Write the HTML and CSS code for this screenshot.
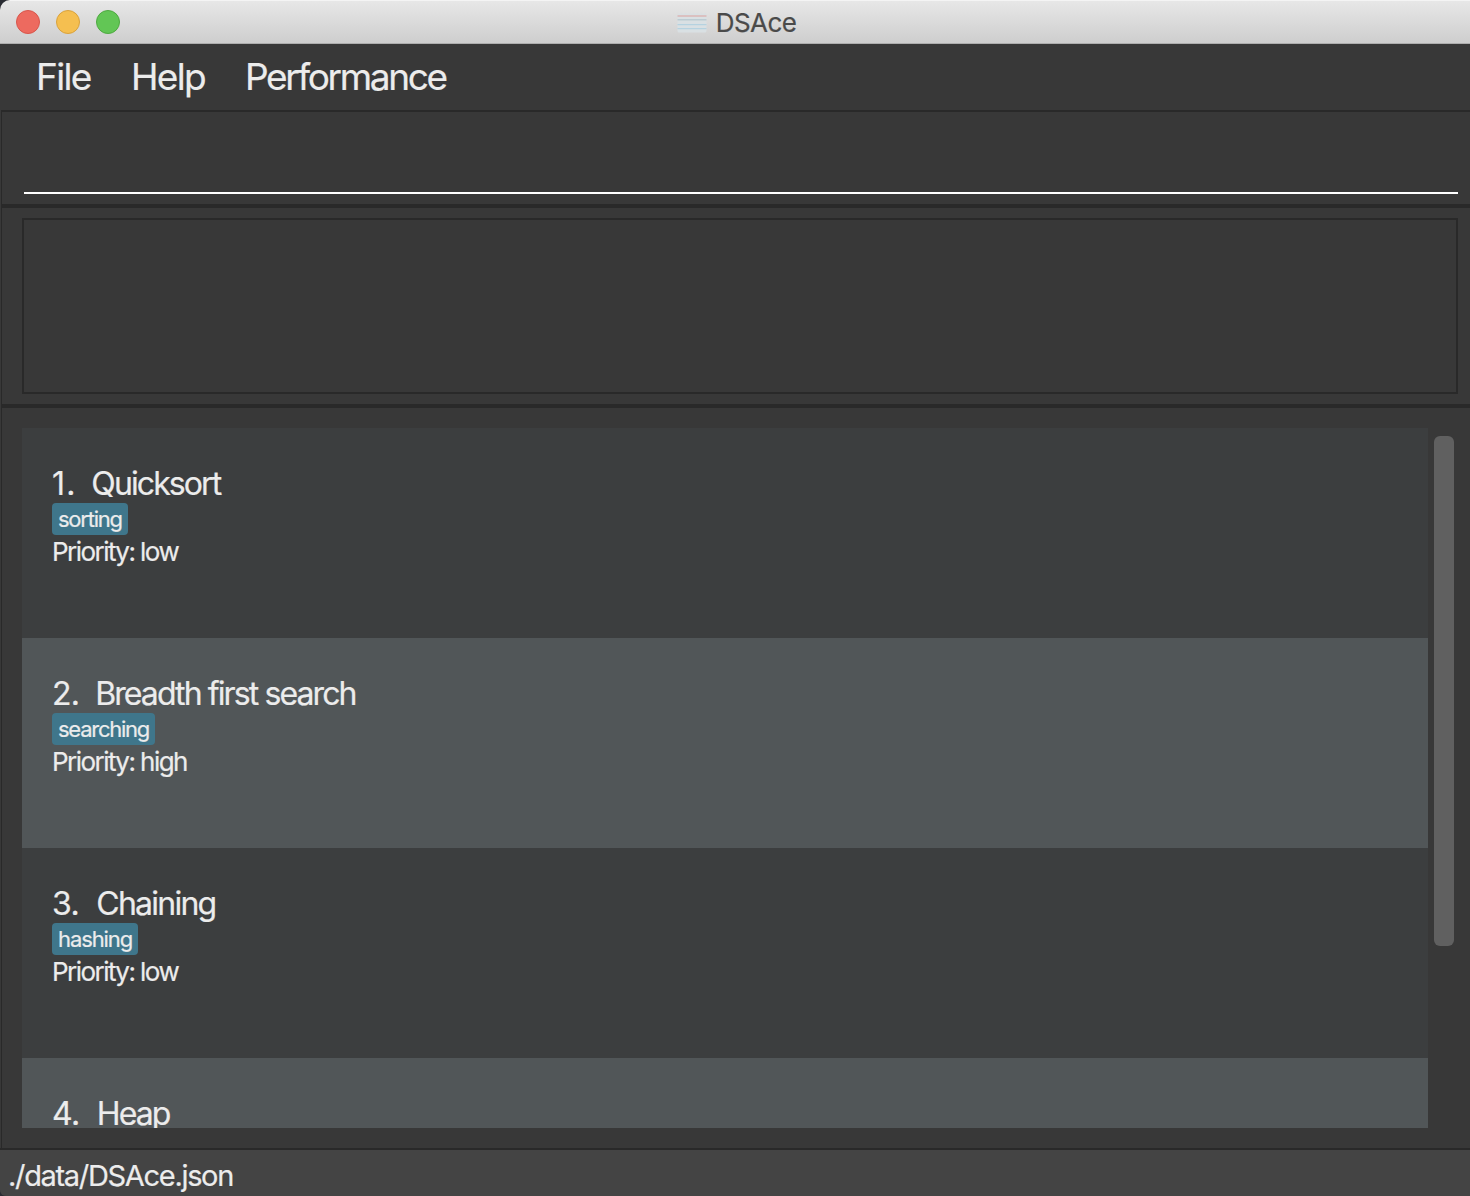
FILE: index.html
```html
<!DOCTYPE html>
<html lang="en">
<head>
<meta charset="utf-8">
<title>DSAce</title>
<link rel="stylesheet" href="styles.css">
</head>
<body>
<div class="window">
  <header class="titlebar">
    <div class="lights">
      <span class="light close"></span>
      <span class="light minimise"></span>
      <span class="light zoom"></span>
    </div>
    <div class="caption">
      <svg class="app-icon" width="30" height="20" viewBox="0 0 30 20">
        <rect x="0.5" y="0.5" width="29" height="19" rx="1.5" fill="#d9e0e3"/>
        <rect x="0.5" y="2" width="29" height="2" fill="#dbc0c0"/>
        <rect x="0.5" y="6" width="29" height="1.5" fill="#bccbd2"/>
        <rect x="0.5" y="11" width="29" height="1.2" fill="#b5d2e0"/>
        <rect x="0.5" y="15" width="29" height="1.2" fill="#b5d2e0"/>
      </svg>
      <span class="title">DSAce</span>
    </div>
  </header>
  <nav class="menu">
    <span class="menu-file">File</span>
    <span class="menu-help">Help</span>
    <span class="menu-performance">Performance</span>
  </nav>
  <main class="content">
    <section class="command"><div class="command-field"></div></section>
    <section class="result"><div class="result-display"></div></section>
    <section class="list-pane">
      <ul class="list">
        <li class="card">
          <div class="name"><span class="index first">1.</span><span class="n1">Quicksort</span></div>
          <span class="tag t1">sorting</span>
          <div class="priority">Priority: low</div>
        </li>
        <li class="card">
          <div class="name"><span class="index second">2.</span><span class="n2">Breadth first search</span></div>
          <span class="tag t2">searching</span>
          <div class="priority">Priority: high</div>
        </li>
        <li class="card">
          <div class="name"><span class="index">3.</span><span class="n3">Chaining</span></div>
          <span class="tag t3">hashing</span>
          <div class="priority">Priority: low</div>
        </li>
        <li class="card">
          <div class="name"><span class="index">4.</span><span class="n4">Heap</span></div>
        </li>
      </ul>
      <div class="scroll"><div class="thumb"></div></div>
    </section>
  </main>
  <footer class="status">./data/DSAce.json</footer>
</div>
</body>
</html>
```
FILE: styles.css
```css
* { box-sizing: border-box; }
html, body { margin: 0; height: 100%; }
body {
  background: #2a2c33;
  font-family: Inter, "Liberation Sans", sans-serif;
  color: #ececec;
  overflow: hidden;
  white-space: nowrap;
  -webkit-text-stroke: 0.2px currentColor;
}
.window {
  display: flex;
  flex-direction: column;
  width: 1470px;
  height: 1196px;
  background: #383838;
  border-radius: 10px 0 0 6px;
  overflow: hidden;
}
.titlebar {
  display: grid;
  grid-template-columns: 1fr auto 1fr;
  align-items: center;
  height: 44px;
  padding: 0 0 0 16px;
  background: linear-gradient(#e7e7e7, #cecece);
  border-top: 1px solid #f4f4f4;
  border-bottom: 1px solid #aeaeae;
}
.lights { display: flex; gap: 16px; }
.light { width: 24px; height: 24px; border-radius: 50%; border: 1px solid; }
.close { background: #ed6a5f; border-color: #d8564c; }
.minimise { background: #f5bf50; border-color: #d9a23c; }
.zoom { background: #62c655; border-color: #4ea940; }
.caption { display: flex; align-items: center; gap: 9px; margin: 0 -2px 0 -15px; }
.app-icon { margin-top: 1px; }
.title { font-size: 26px; line-height: 32px; color: #4a4a4a; letter-spacing: -0.6px; padding-top: 2px; }
.menu {
  display: flex;
  align-items: center;
  height: 66px;
  padding-left: 36px;
  font-size: 37px;
  line-height: 44px;
}
.menu-file { width: 95px; letter-spacing: -1.7px; }
.menu-help { width: 114px; letter-spacing: -1.7px; }
.menu-performance { letter-spacing: -2.35px; }
.content {
  flex: 1;
  display: flex;
  flex-direction: column;
  margin-left: 1px;
  border-left: 1px solid #292929;
  border-top: 2px solid #292929;
}
.command { height: 96px; padding: 0 12px 10px 22px; border-bottom: 4px solid #292929; }
.command-field { height: 82px; border-bottom: 2px solid #fff; }
.result { height: 200px; padding: 10px 12px 10px 20px; border-bottom: 4px solid #292929; }
.result-display { height: 176px; border: 2px solid #292929; }
.list-pane { display: flex; gap: 6px; height: 740px; padding: 20px 16px 20px 20px; }
.list { flex: 1; height: 700px; margin: 0; padding: 0; list-style: none; overflow: hidden; }
.card { height: 210px; padding: 38px 30px 0; background: #3c3e3f; }
.card:nth-child(even) { background: #515658; }
.name { display: flex; gap: 18px; font-size: 32px; line-height: 36px; height: 37px; letter-spacing: -1.9px; }
.index { letter-spacing: -0.5px; margin-right: -1px; }
.first { letter-spacing: 1.3px; margin-right: -3.5px; }
.second { letter-spacing: -0.8px; margin-right: -2px; }
.n3 { letter-spacing: -1.75px; }
.tag {
  display: block;
  width: max-content;
  height: 32px;
  padding: 0 6px;
  border-radius: 4px;
  background: #3f768b;
  font-size: 22px;
  line-height: 32px;
  letter-spacing: -1.25px;
}
.t3 { letter-spacing: -1.1px; }
.priority { font-size: 26px; line-height: 33px; letter-spacing: -1.55px; }
.scroll { width: 20px; padding-top: 8px; }
.thumb { height: 510px; border-radius: 6px; background: #606060; }
.status {
  height: 48px;
  padding: 4px 0 0 8px;
  border-top: 2px solid #292929;
  background: #444;
  font-size: 29px;
  line-height: 44px;
  letter-spacing: -1.32px;
}
```
